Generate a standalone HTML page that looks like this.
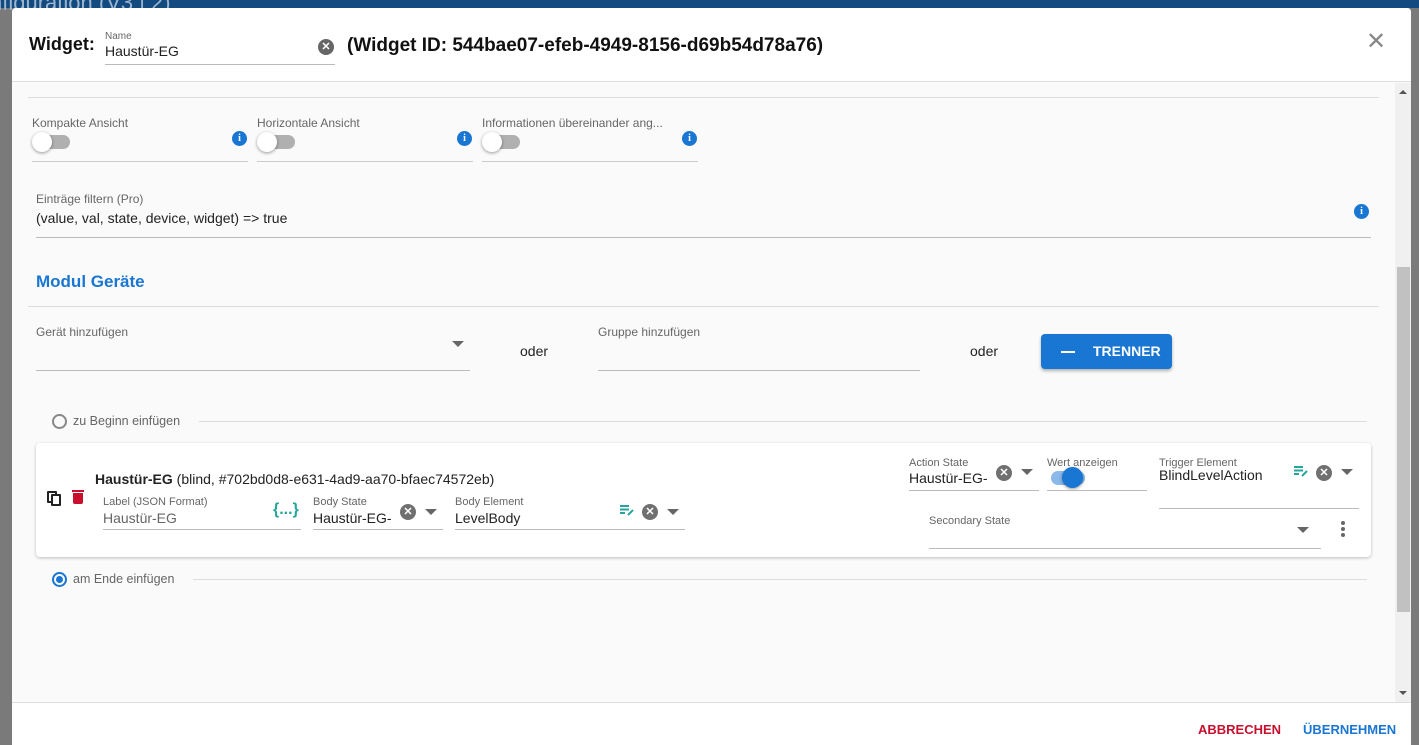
<!DOCTYPE html>
<html><head><meta charset="utf-8"><style>
*{box-sizing:border-box;margin:0;padding:0}
body{width:1419px;height:745px;overflow:hidden;position:relative;background:#7a7a7a;font-family:"Liberation Sans",sans-serif;color:#222}
.a{position:absolute}
.lbl{position:absolute;font-size:12px;color:#666}
.val{position:absolute;font-size:14px;color:#222}
.ln{position:absolute;height:1px;background:#bbb}
.info{position:absolute;width:15px;height:15px;border-radius:50%;background:#1976d2;color:#fff;font:bold 10px "Liberation Serif",serif;text-align:center;line-height:15px}
.clr{position:absolute;width:16px;height:16px;border-radius:50%;background:#707070;color:#fff;font:bold 11px "Liberation Sans";text-align:center;line-height:16px}
.tri{position:absolute;width:0;height:0;border-left:6px solid transparent;border-right:6px solid transparent;border-top:6px solid #666}
.sw{position:absolute;width:34px;height:14px;border-radius:7px;background:#b0b0b0}
.sw i{position:absolute;left:-4px;top:-3px;width:20px;height:20px;border-radius:50%;background:#fff;box-shadow:0 1px 3px rgba(0,0,0,.4)}
</style></head><body>
<div class="a" style="left:0;top:0;width:1419px;height:8px;background:#134a80"></div>
<div class="a" style="left:0;top:0;font-size:22px;color:#9db6d0;left:-10px;top:-10px">nfiguration (V3 | 2)</div>
<div class="a" style="left:12px;top:8px;width:1399px;height:737px;background:#fafafa;border-radius:4px 4px 0 0;overflow:hidden">
 <div class="a" style="left:0;top:0;width:1399px;height:74px;background:#fff;border-bottom:1px solid #ddd"></div>
 <div class="a" style="left:17px;top:26px;font-size:18px;color:#111;font-weight:bold">Widget:</div>
 <div class="lbl" style="left:93px;top:23px;font-size:10px">Name</div>
 <div class="val" style="left:93px;top:35px">Haustür-EG</div>
 <div class="ln" style="left:93px;top:56px;width:230px"></div>
 <div class="clr" style="left:306px;top:31px;background:#666">✕</div>
 <div class="a" style="left:335px;top:27px;font-size:19px;color:#111;font-weight:bold">(Widget ID: 544bae07-efeb-4949-8156-d69b54d78a76)</div>
 <div class="a" style="left:1354px;top:22px;font-size:24px;color:#888;line-height:24px">✕</div>
 <div class="ln" style="left:16px;top:89px;width:1351px;background:#ddd"></div>
 <div class="lbl" style="left:20px;top:108px">Kompakte Ansicht</div>
 <div class="sw" style="left:24px;top:127px"><i></i></div>
 <div class="info" style="left:220px;top:123px">i</div>
 <div class="ln" style="left:20px;top:153px;width:216px;background:#ccc"></div>
 <div class="lbl" style="left:245px;top:108px">Horizontale Ansicht</div>
 <div class="sw" style="left:249px;top:127px"><i></i></div>
 <div class="info" style="left:445px;top:123px">i</div>
 <div class="ln" style="left:245px;top:153px;width:216px;background:#ccc"></div>
 <div class="lbl" style="left:470px;top:108px">Informationen übereinander ang...</div>
 <div class="sw" style="left:474px;top:127px"><i></i></div>
 <div class="info" style="left:670px;top:123px">i</div>
 <div class="ln" style="left:470px;top:153px;width:216px;background:#ccc"></div>
 <div class="lbl" style="left:24px;top:184px">Einträge filtern (Pro)</div>
 <div class="val" style="left:24px;top:202px">(value, val, state, device, widget) =&gt; true</div>
 <div class="info" style="left:1342px;top:196px">i</div>
 <div class="ln" style="left:24px;top:229px;width:1335px"></div>
 <div class="a" style="left:24px;top:264px;font-size:17px;font-weight:bold;color:#1976d2">Modul Geräte</div>
 <div class="ln" style="left:16px;top:298px;width:1351px;background:#ddd"></div>
 <div class="lbl" style="left:24px;top:317px">Gerät hinzufügen</div>
 <div class="tri" style="left:440px;top:333px"></div>
 <div class="ln" style="left:24px;top:362px;width:434px"></div>
 <div class="val" style="left:508px;top:335px">oder</div>
 <div class="lbl" style="left:586px;top:317px">Gruppe hinzufügen</div>
 <div class="ln" style="left:586px;top:362px;width:322px"></div>
 <div class="val" style="left:958px;top:335px">oder</div>
 <div class="a" style="left:1029px;top:326px;width:131px;height:35px;background:#1976d2;border-radius:4px;box-shadow:0 2px 3px rgba(0,0,0,.3);color:#fff;font-size:14px;font-weight:bold;line-height:35px"><span style="position:absolute;left:20px;top:17px;width:14px;height:2px;background:#fff"></span><span style="position:absolute;left:52px">TRENNER</span></div>
 <div class="a" style="left:40px;top:406px;width:15px;height:15px;border:2px solid #888;border-radius:50%"></div>
 <div class="lbl" style="left:61px;top:406px;font-size:12.5px">zu Beginn einfügen</div>
 <div class="ln" style="left:187px;top:413px;width:1168px;background:#ddd"></div>
 <div class="a" style="left:24px;top:435px;width:1335px;height:114px;background:#fff;border-radius:4px;box-shadow:0 1px 3px rgba(0,0,0,.25)"></div>
 <div class="a" style="left:35px;top:483px;width:10px;height:12px;border:2px solid #222;border-radius:1px"></div>
 <div class="a" style="left:39px;top:486px;width:10px;height:12px;border:2px solid #222;background:#fff;border-radius:1px"></div>
 <div class="a" style="left:61px;top:485px;width:10px;height:11px;background:#c8102e;border-radius:0 0 2px 2px"></div>
 <div class="a" style="left:60px;top:482px;width:12px;height:2px;background:#c8102e"></div>
 <div class="a" style="left:83px;top:463px;font-size:14px"><b>Haustür-EG</b> (blind, #702bd0d8-e631-4ad9-aa70-bfaec74572eb)</div>
 <div class="lbl" style="left:91px;top:488px;font-size:11px">Label (JSON Format)</div>
 <div class="val" style="left:91px;top:502px;color:#666">Haustür-EG</div>
 <div class="a" style="left:261px;top:493px;color:#26a69a;font-size:16px;font-weight:bold">{...}</div>
 <div class="ln" style="left:91px;top:521px;width:198px"></div>
 <div class="lbl" style="left:301px;top:488px;font-size:11px">Body State</div>
 <div class="val" style="left:301px;top:502px">Haustür-EG-</div>
 <div class="clr" style="left:388px;top:496px">✕</div>
 <div class="tri" style="left:413px;top:501px"></div>
 <div class="ln" style="left:301px;top:521px;width:130px"></div>
 <div class="lbl" style="left:443px;top:488px;font-size:11px">Body Element</div>
 <div class="val" style="left:443px;top:502px">LevelBody</div>
 <svg class="a" style="left:607px;top:496px" width="16" height="12" viewBox="0 0 16 12"><path d="M1 2h9M1 5.5h9M1 9h5M9 11l5-5" stroke="#26a69a" stroke-width="2" fill="none"/></svg>
 <div class="clr" style="left:630px;top:496px">✕</div>
 <div class="tri" style="left:655px;top:501px"></div>
 <div class="ln" style="left:443px;top:521px;width:230px"></div>
 <div class="lbl" style="left:897px;top:449px;font-size:11px">Action State</div>
 <div class="val" style="left:897px;top:462px">Haustür-EG-</div>
 <div class="clr" style="left:984px;top:457px">✕</div>
 <div class="tri" style="left:1009px;top:461px"></div>
 <div class="ln" style="left:897px;top:482px;width:130px"></div>
 <div class="lbl" style="left:1035px;top:449px;font-size:11px">Wert anzeigen</div>
 <div class="a" style="left:1039px;top:463px;width:34px;height:14px;border-radius:7px;background:#8bb9ea"></div>
 <div class="a" style="left:1050px;top:459px;width:21px;height:21px;border-radius:50%;background:#1976d2;box-shadow:0 1px 3px rgba(0,0,0,.4)"></div>
 <div class="ln" style="left:1035px;top:482px;width:100px"></div>
 <div class="lbl" style="left:1147px;top:449px;font-size:11px">Trigger Element</div>
 <div class="val" style="left:1147px;top:459px">BlindLevelAction</div>
 <svg class="a" style="left:1281px;top:457px" width="16" height="12" viewBox="0 0 16 12"><path d="M1 2h9M1 5.5h9M1 9h5M9 11l5-5" stroke="#26a69a" stroke-width="2" fill="none"/></svg>
 <div class="clr" style="left:1304px;top:457px">✕</div>
 <div class="tri" style="left:1329px;top:461px"></div>
 <div class="ln" style="left:1147px;top:500px;width:200px"></div>
 <div class="lbl" style="left:917px;top:507px;font-size:11px">Secondary State</div>
 <div class="tri" style="left:1285px;top:519px"></div>
 <div class="ln" style="left:917px;top:540px;width:392px"></div>
 <div class="a" style="left:1329px;top:513px;width:4px;height:4px;border-radius:50%;background:#666;box-shadow:0 6px 0 #666,0 12px 0 #666"></div>
 <div class="a" style="left:40px;top:564px;width:15px;height:15px;border:2px solid #1976d2;border-radius:50%"></div>
 <div class="a" style="left:44px;top:568px;width:7px;height:7px;background:#1976d2;border-radius:50%"></div>
 <div class="lbl" style="left:61px;top:564px;font-size:12.5px">am Ende einfügen</div>
 <div class="ln" style="left:181px;top:571px;width:1174px;background:#ddd"></div>
 <div class="a" style="left:1383px;top:75px;width:16px;height:619px;background:#f0f0f0"></div>
 <div class="a" style="left:1385px;top:259px;width:13px;height:345px;background:#c1c1c1"></div>
 <div class="a" style="left:1387px;top:82px;border-left:4px solid transparent;border-right:4px solid transparent;border-bottom:4px solid #555"></div>
 <div class="a" style="left:1387px;top:683px;border-left:4px solid transparent;border-right:4px solid transparent;border-top:4px solid #555"></div>
 <div class="a" style="left:0;top:694px;width:1399px;height:43px;background:#fff;border-top:1px solid #ddd"></div>
 <div class="a" style="left:1186px;top:714px;font-size:13px;font-weight:bold;color:#c8102e">ABBRECHEN</div>
 <div class="a" style="left:1291px;top:714px;font-size:13px;font-weight:bold;color:#1976d2">ÜBERNEHMEN</div>
</div>
</body></html>
